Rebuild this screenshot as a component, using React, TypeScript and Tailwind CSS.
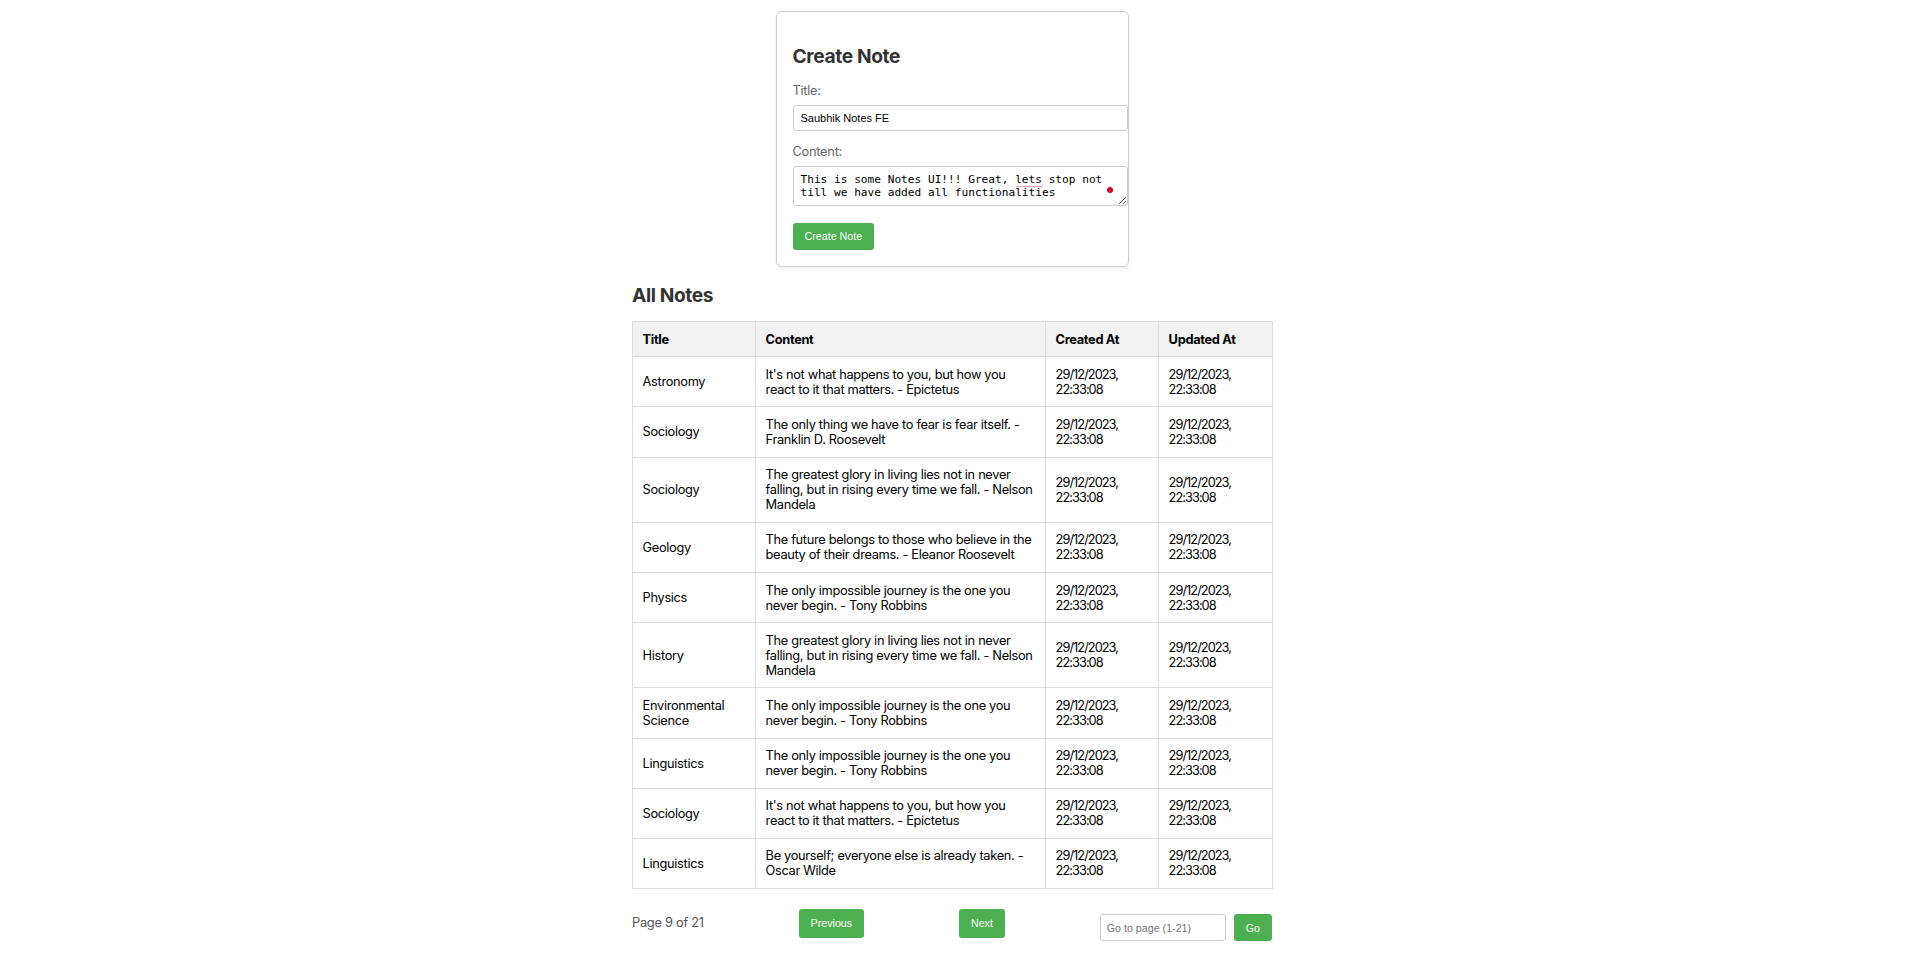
import React from "react";

const notes: [string, string][] = [
  ["Astronomy", "It's not what happens to you, but how you react to it that matters. - Epictetus"],
  ["Sociology", "The only thing we have to fear is fear itself. - Franklin D. Roosevelt"],
  ["Sociology", "The greatest glory in living lies not in never falling, but in rising every time we fall. - Nelson Mandela"],
  ["Geology", "The future belongs to those who believe in the beauty of their dreams. - Eleanor Roosevelt"],
  ["Physics", "The only impossible journey is the one you never begin. - Tony Robbins"],
  ["History", "The greatest glory in living lies not in never falling, but in rising every time we fall. - Nelson Mandela"],
  ["Environmental Science", "The only impossible journey is the one you never begin. - Tony Robbins"],
  ["Linguistics", "The only impossible journey is the one you never begin. - Tony Robbins"],
  ["Sociology", "It's not what happens to you, but how you react to it that matters. - Epictetus"],
  ["Linguistics", "Be yourself; everyone else is already taken. - Oscar Wilde"],
];

function DateCell() {
  return (
    <td className="border border-[#ddd] p-[9.6px] align-middle tracking-[-0.075em]">
      29/12/2023, 22:33:08
    </td>
  );
}

export default function App() {
  return (
    <div className="relative min-h-screen bg-white font-['Inter','Noto_Sans',sans-serif] text-black">
      <div className="flex flex-col items-center pr-2 pt-[11px] pb-4">
        {/* Create card */}
        <div className="w-[353px] rounded-[6px] border border-[#cfcfcf] bg-white px-4 pt-[33px] pb-[16px] shadow-[0_1px_3px_rgba(0,0,0,0.08)]">
          <h2 className="text-[19.2px] leading-[23px] font-bold tracking-[-0.02em] text-[#333]">Create Note</h2>
          <label className="mt-[15px] block text-[12.8px] leading-[16px] tracking-[-0.02em] text-[#666]">Title:</label>
          <input
            readOnly
            value="Saubhik Notes FE"
            className="mt-[6px] block h-[26px] w-[335px] rounded-[3px] border border-[#ccc] px-[7px] font-['Liberation_Sans',Arial,sans-serif] text-[11px] text-black outline-none"
          />
          <label className="mt-[13px] block text-[12.8px] leading-[16px] tracking-[-0.02em] text-[#666]">Content:</label>
          <div className="relative mt-[6px] w-[335px]">
            <textarea
              readOnly
              value="This is some Notes UI!!! Great, lets stop not till we have added all functionalities"
              className="block h-[40px] w-[335px] resize overflow-hidden rounded-[3px] border border-[#ccc] px-[7px] py-[6px] font-['DejaVu_Sans_Mono',monospace] text-[11.15px] leading-[13px] text-black outline-none"
            />
            <span className="absolute left-[223px] top-[19.5px] h-[1.5px] w-[27px] bg-[#f3a3b3]" />
            <span className="absolute left-[314px] top-[20.5px] h-[6.5px] w-[6.5px] rounded-full bg-[#d9002a]" />
          </div>
          <button className="mt-[17px] flex h-[27px] items-center rounded-[3px] bg-[#4caf50] px-3 font-['Liberation_Sans',Arial,sans-serif] text-[10.7px] text-white">
            Create Note
          </button>
        </div>

        {/* All notes */}
        <div className="mt-[17px] w-[640px]">
          <h2 className="text-[19.2px] leading-[23px] font-bold tracking-[-0.02em] text-[#333]">All Notes</h2>
          <table className="mt-[14px] w-[640px] table-fixed border-collapse text-[12.8px] leading-[15px] tracking-[-0.025em] text-black">
            <colgroup>
              <col className="w-[123px]" />
              <col className="w-[290px]" />
              <col className="w-[113px]" />
              <col className="w-[114px]" />
            </colgroup>
            <thead>
              <tr className="bg-[#f2f2f2]">
                <th className="border border-[#ddd] p-[9.6px] text-left font-bold">Title</th>
                <th className="border border-[#ddd] p-[9.6px] text-left font-bold">Content</th>
                <th className="border border-[#ddd] p-[9.6px] text-left font-bold">Created At</th>
                <th className="border border-[#ddd] p-[9.6px] text-left font-bold">Updated At</th>
              </tr>
            </thead>
            <tbody>
              {notes.map(([t, c], i) => (
                <tr key={i}>
                  <td className="border border-[#ddd] p-[9.6px] align-middle">{t}</td>
                  <td className="border border-[#ddd] p-[9.6px] align-middle">{c}</td>
                  <DateCell />
                  <DateCell />
                </tr>
              ))}
            </tbody>
          </table>

          <div className="mt-4 flex items-center justify-between">
            <span className="text-[12.8px] leading-[16px] tracking-[-0.02em] text-[#555]">Page 9 of 21</span>
            <button className="flex h-[29px] items-center rounded-[3px] bg-[#4caf50] px-3 font-['Liberation_Sans',Arial,sans-serif] text-[10.7px] text-white">
              Previous
            </button>
            <button className="flex h-[29px] items-center rounded-[3px] bg-[#4caf50] px-3 font-['Liberation_Sans',Arial,sans-serif] text-[10.7px] text-white">
              Next
            </button>
            <div className="mt-[9px] flex items-center gap-[8px]">
              <input
                placeholder="Go to page (1-21)"
                className="h-[27px] w-[126px] rounded-[3px] border border-[#ccc] px-[6px] font-['Liberation_Sans',Arial,sans-serif] text-[10.7px] text-black outline-none placeholder:text-[#757575]"
              />
              <button className="flex h-[27px] items-center rounded-[3px] bg-[#4caf50] px-3 font-['Liberation_Sans',Arial,sans-serif] text-[10.7px] text-white">
                Go
              </button>
            </div>
          </div>
        </div>
      </div>
    </div>
  );
}
